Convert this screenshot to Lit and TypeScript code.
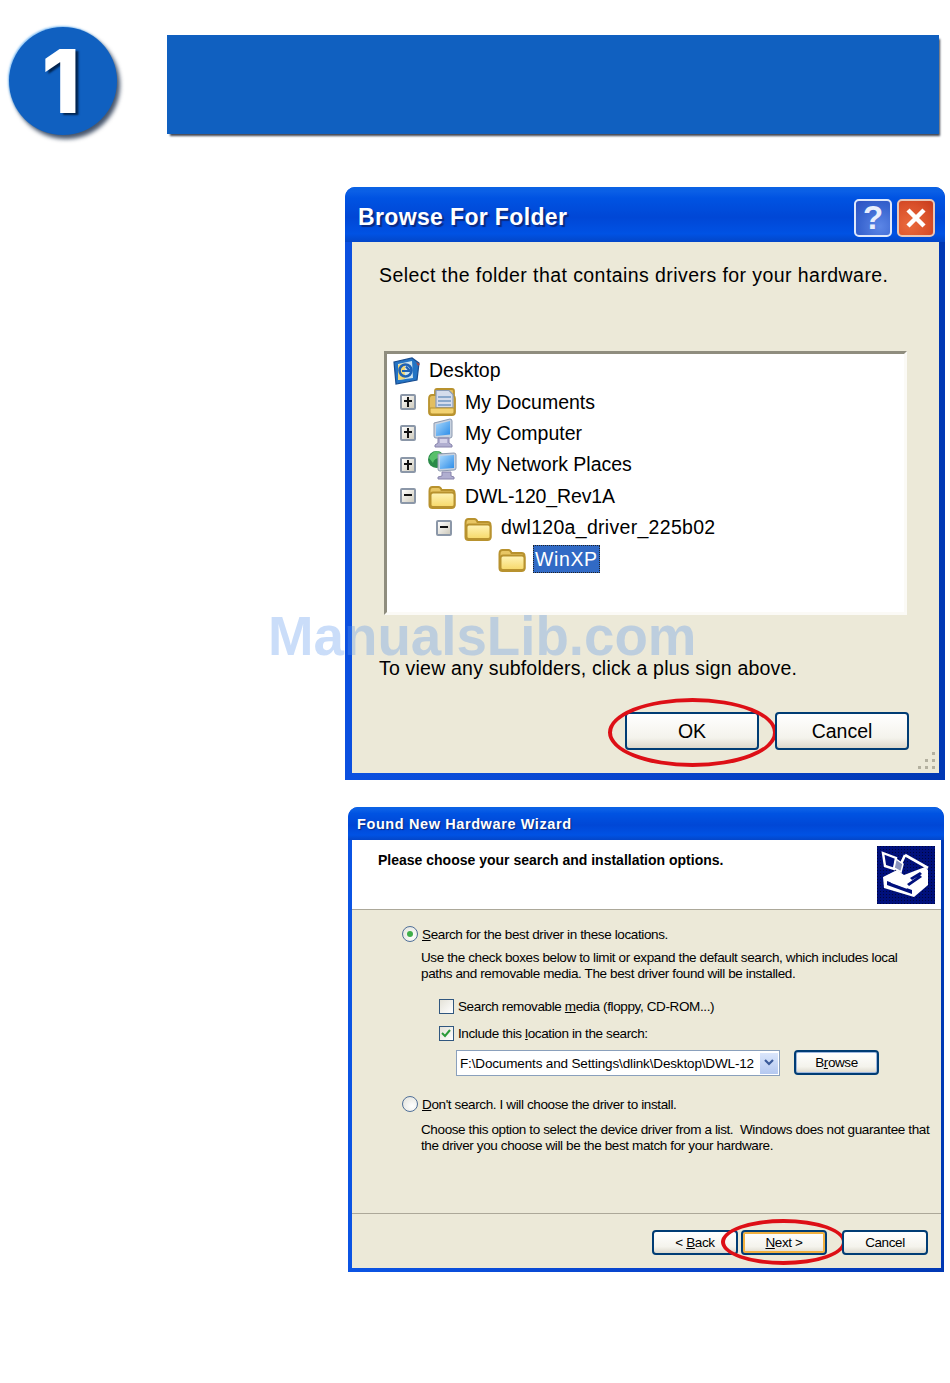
import { LitElement, html, css, svg } from "lit";
import { customElement } from "lit/decorators.js";

const grad = svg`<defs>
  <linearGradient id="fy" x1="0" y1="0" x2="0" y2="1"><stop offset="0" stop-color="#fff4b8"/><stop offset="1" stop-color="#f6d868"/></linearGradient>
  <linearGradient id="scr" x1="0" y1="0" x2="1" y2="1"><stop offset="0" stop-color="#a8d8fc"/><stop offset="1" stop-color="#2c8ce8"/></linearGradient>
</defs>`;

const folder = () => svg`<svg class="ico" viewBox="0 0 28 28">${grad}
  <path d="M1.500 9q0-4 3-4h6q2 0 3 3h10q3 0 3 3v12q0 3-3 3H4.500q-3 0-3-3z" fill="#e8c664" stroke="#b8922e" stroke-width="2"/>
  <path d="M2.500 23V13q0-2.500 2.500-2.500h19q2.500 0 2.500 2.500v10q0 2-2.500 2H5q-2.500 0-2.500-2z" fill="url(#fy)" stroke="#b8922e" stroke-width="2"/>
</svg>`;

const documents = svg`<svg class="ico" viewBox="0 0 28 28">${grad}
  <path d="M1 11q0-4 3-4h3v-4q0-2 2-2h15q2 0 2 2v5q1 1 1 3v13q0 3-3 3H4q-3 0-3-3z" fill="#e2be60" stroke="#b8922e" stroke-width="1.800"/>
  <path d="M8 2.500h13l4 4v13H8z" fill="#d4dcec" stroke="#8a9cb8" stroke-width="1.200"/>
  <path d="M10 9h13M10 13h13M10 17h13" stroke="#8aa8cc" stroke-width="1.800"/>
  <path d="M2 20h24v4q0 2-2 2H4q-2 0-2-2z" fill="#f2d272" stroke="#b8922e" stroke-width="1"/>
</svg>`;

const computer = svg`<svg class="ico tall" viewBox="0 0 28 30">${grad}
  <path d="M6 5l16-4q2 0 2 2v15q0 2-2 2L8 20q-2 0-2-2z" fill="#c8d2e0" stroke="#8d9ab0" stroke-width="1"/>
  <path d="M8 6.500l14-3.500v13.500L8 18z" fill="url(#scr)"/>
  <path d="M10 20h11v5l3 2v2H7v-2l3-2z" fill="#b0aed0" stroke="#8884ac" stroke-width="1"/>
  <path d="M12 21h7v4h-7z" fill="#d4d2e8"/>
</svg>`;

const network = svg`<svg class="ico tall" viewBox="0 0 28 30">${grad}
  <circle cx="8.500" cy="9.500" r="8.500" fill="#2a8a48"/>
  <path d="M1 8q3-7 9-7 4 2 2 7-6 0-7 5z" fill="#58c06a"/>
  <path d="M10 4l16-1q2 0 2 2v13q0 2-2 2l-14 1q-2 0-2-2z" fill="#c8d2e0" stroke="#8d9ab0" stroke-width="1"/>
  <path d="M12 6l14-1v13l-14 1z" fill="url(#scr)"/>
  <path d="M14 22h9v4l3 1v2H10v-2l4-1z" fill="#b0aed0" stroke="#8884ac" stroke-width="1"/>
</svg>`;

const desktop = svg`<svg class="ico" viewBox="0 0 28 28">
  <path d="M2 5l18-4 7 5-2 17-21 4z" fill="#2474c4" stroke="#174c90" stroke-width="1.200"/>
  <path d="M6 7l14-3 1 17-15 2z" fill="#cfe6f0"/>
  <path d="M6 8l7-2v16l-7 1z" fill="#f2d878"/>
  <circle cx="13.500" cy="13.500" r="6" fill="none" stroke="#1f62b4" stroke-width="2.600"/>
  <path d="M10 14h8M14 9.500l4 4.500" stroke="#1f62b4" stroke-width="2.200"/>
  <path d="M24 5l4 2-2 2z" fill="#a04848"/>
</svg>`;

const hardware = svg`<svg viewBox="0 0 58 58" class="hw">
  <defs><pattern id="dots" width="3" height="3" patternUnits="userSpaceOnUse">
    <rect width="3" height="3" fill="#00107c"/><rect width="1" height="1" fill="#00063e"/></pattern></defs>
  <rect width="58" height="58" fill="url(#dots)"/>
  <path d="M6 31l14-7 7 5 21-8 3 3v15L37 51 7 42z" fill="#fff"/>
  <path d="M10 35l25 9v4L10 39z" fill="#00107c"/>
  <path d="M14 36l16 6" stroke="#fff" stroke-width="1.800"/>
  <path d="M33 32l10-6 2 2-10 6zM30 38l13-9 2 2-13 9z" fill="#00107c"/>
  <path d="M28 9l23 13M28 9l-6 13" stroke="#fff" stroke-width="2.600" fill="none"/>
  <path d="M6 7l13 5-2 11-9-3z" fill="#00107c" stroke="#fff" stroke-width="2.400"/>
  <path d="M19 13l7 5-2 8-7-4z" fill="#8a94bc" stroke="#fff" stroke-width="1.500"/>
</svg>`;

const tree = [
  { indent: 5, icon: desktop, label: "Desktop", exp: "", ls: 0 },
  { indent: 13, icon: documents, label: "My Documents", exp: "+", ls: 0 },
  { indent: 13, icon: computer, label: "My Computer", exp: "+", ls: 0 },
  { indent: 13, icon: network, label: "My Network Places", exp: "+", ls: 0 },
  { indent: 13, icon: folder(), label: "DWL-120_Rev1A", exp: "-", ls: -0.15 },
  { indent: 49, icon: folder(), label: "dwl120a_driver_225b02", exp: "-", ls: 0.3 },
  { indent: 111, icon: folder(), label: "WinXP", exp: "", sel: true, ls: 0.6 },
];

@customElement("app-root")
export class AppRoot extends LitElement {
  static styles = css`
    :host { display: block; height: 1383px; overflow: hidden; background: #fff; color: #000; font-family: "Liberation Sans", Arial, sans-serif; }
    .page { position: relative; height: 1383px; padding-top: 27px; box-sizing: border-box; }
    .head { display: flex; align-items: flex-start; margin-left: 9px; }
    .badge { box-sizing: border-box; width: 108px; height: 108px; padding-right: 4px; border-radius: 50%; background: #1060c0; box-shadow: 3px 4px 4px rgba(10, 30, 60, .75), -1px -1px 2px rgba(90, 170, 240, .7); display: flex; align-items: center; justify-content: center; font: 800 88px/1 Inter, sans-serif; color: #fff; text-shadow: 3px 2px 2px #02244f; }
    .banner { margin: 8px 0 0 50px; width: 772px; height: 99px; background: #1060c0; box-shadow: 2px 3px 2px -1px rgba(30, 35, 50, .85); }
    .win { position: relative; display: flex; flex-direction: column; box-sizing: border-box; border-radius: 10px 10px 0 0; }
    .title { display: flex; align-items: center; justify-content: space-between; flex: none; box-sizing: border-box; color: #fff; font-family: "Liberation Sans", sans-serif; font-weight: bold; white-space: nowrap; background: linear-gradient(#0a63e4 0, #0a5fe6 8%, #0053e2 20%, #0047d6 55%, #0052e4 85%, #0346c8 100%); border-radius: 10px 10px 0 0; }
    .client { background: #ece9d8; flex: 1; display: flex; flex-direction: column; position: relative; min-height: 0; }

    .w1 { margin: 52px 0 0 345px; width: 600px; height: 593px; padding-bottom: 7px; background: linear-gradient(90deg, #0b50e0, #0844cc 50%, #0038b4); }
    .w1 .title { height: 55px; padding: 6px 10px 0 13px; font-size: 23px; letter-spacing: 0.36px; text-shadow: 2px 2px 1px #0a2a80; }
    .w1 .client { margin: 0 6px 0 7px; padding-left: 27px; }
    .cap { display: flex; gap: 5px; }
    .cbtn { box-sizing: border-box; width: 38px; height: 38px; border: 2px solid #dfe8fb; border-radius: 5px; display: flex; align-items: center; justify-content: center; font: bold 33px/1 "Liberation Sans", sans-serif; color: #e8eefc; text-shadow: none; letter-spacing: 0; }
    .help { background: radial-gradient(circle at 70% 75%, #5c86e6, #3864cf 60%, #2c50c0); }
    .close { background: radial-gradient(circle at 30% 70%, #ea6a3c, #d9502a 60%, #c53a1c); border-color: #e9c6b6; }
    .close svg { width: 26px; height: 26px; }
    .lg { font-size: 19.5px; line-height: 24px; white-space: nowrap; }
    .l1 { margin-top: 21px; letter-spacing: 0.43px; }
    .tree { box-sizing: border-box; margin: 64px 0 0 5px; padding-top: 1px; width: 523px; height: 264px; background: #fff; border: 3px solid #fbfaf6; border-top-color: #8f8d7e; border-left-color: #8f8d7e; display: flex; flex-direction: column; flex: none; }
    .row { display: flex; align-items: center; height: 31.4px; flex: none; font-size: 19.5px; white-space: nowrap; }
    .exp { box-sizing: border-box; width: 16px; height: 16px; margin-right: 12px; border: 2px solid #8b97a8; border-radius: 2px; background: linear-gradient(135deg, #fff, #cfcbbd); position: relative; flex: none; }
    .exp::before { content: ""; position: absolute; left: 2px; right: 2px; top: 4px; height: 2px; background: #111; }
    .exp.plus::after { content: ""; position: absolute; top: 1px; bottom: 1px; left: 5px; width: 2px; background: #111; }
    .ico { width: 28px; height: 28px; flex: none; margin-right: 9px; overflow: visible; }
    .ico.tall { height: 30px; }
    .sel { background: #316ac5; color: #fff; outline: 1.500px dotted #222; outline-offset: -1px; margin-left: -2px; padding: 0 2px; height: 28px; line-height: 28px; }
    .l2 { margin-top: 41px; letter-spacing: 0.2px; }
    .btns { display: flex; justify-content: flex-end; }
    .w1 .btns { margin-top: 32px; padding-right: 30px; gap: 16px; }
    .btn { box-sizing: border-box; position: relative; display: flex; align-items: center; justify-content: center; background: linear-gradient(#fff, #f4f3ec 70%, #dcd8cc); border: 2px solid #003c74; border-radius: 4px; white-space: nowrap; }
    .w1 .btn { width: 134px; height: 38px; font-size: 19.500px; }
    .ring { position: absolute; box-sizing: border-box; border: 4px solid #dd0f16; border-radius: 50%; pointer-events: none; }
    .r1 { left: -19px; top: -16px; width: 169px; height: 69px; }
    .grip { position: absolute; right: 2px; bottom: 2px; width: 20px; height: 20px; }

    .w2 { margin: 27px 0 0 348px; width: 596px; height: 465px; padding-bottom: 4px; background: linear-gradient(90deg, #0b54e4, #0844cc 50%, #0038b4); }
    .w2 .title { height: 33px; padding-left: 9px; font-size: 14.500px; letter-spacing: 0.6px; text-shadow: 1px 1px 1px #0a2a80; }
    .w2 .client { margin: 0 3px 0 4px; font-size: 13.5px; letter-spacing: -0.38px; }
    .top { box-sizing: border-box; height: 70px; flex: none; background: #fff; border-bottom: 1px solid #aca899; display: flex; justify-content: space-between; padding: 6px 6px 0 26px; }
    .top b { margin-top: 4px; line-height: 20px; font-size: 14px; letter-spacing: 0; white-space: nowrap; }
    .hw { width: 58px; height: 58px; display: block; }
    .opt { display: flex; align-items: center; height: 16px; white-space: nowrap; }
    .radio { box-sizing: border-box; width: 16px; height: 16px; border-radius: 50%; border: 1.500px solid #4f6f98; background: radial-gradient(circle at 65% 65%, #fff, #e0e0d8); display: flex; align-items: center; justify-content: center; margin-right: 4px; flex: none; }
    .radio i { width: 6px; height: 6px; border-radius: 50%; background: #3fae4a; }
    .check { box-sizing: border-box; width: 15px; height: 15px; border: 1.500px solid #30577f; background: linear-gradient(135deg, #e4e2d8, #fff); margin-right: 4px; flex: none; display: flex; }
    .check svg { width: 12px; height: 12px; }
    .o1 { margin: 16px 0 0 50px; }
    .p { margin: 8px 0 0 69px; line-height: 16px; white-space: nowrap; }
    .o2 { margin: 16px 0 0 87px; }
    .o3 { margin: 11px 0 0 87px; }
    .path { display: flex; align-items: flex-start; gap: 14px; margin: 9px 0 0 104px; }
    .combo { box-sizing: border-box; width: 324px; height: 26px; background: #fff; border: 1.500px solid #8aa0bc; display: flex; align-items: center; justify-content: space-between; padding-left: 3px; white-space: nowrap; letter-spacing: -0.15px; }
    .arrow { width: 18px; height: 21px; margin-right: 1px; background: linear-gradient(#dbe6fb, #b4c8f0); display: flex; align-items: center; justify-content: center; }
    .arrow svg { width: 10px; height: 8px; }
    .browse { width: 85px; height: 25px; box-shadow: inset 0 0 0 1px #9db6dd; }
    .o4 { margin: 20px 0 0 50px; }
    .p2 { margin: 10px 0 0 69px; line-height: 15.500px; white-space: nowrap; }
    .foot { margin-top: auto; box-sizing: border-box; height: 55px; border-top: 1px solid #aca899; padding: 16px 13px 0 0; display: flex; justify-content: flex-end; }
    .foot .btn { width: 86px; height: 25px; }
    .back { margin-right: 3px; }
    .next { margin-right: 15px; box-shadow: inset 0 0 0 2px #f0b040; }
    .r2 { left: -22px; top: -13px; width: 125px; height: 46px; }
    .mark { position: absolute; left: 268px; top: 606px; font: bold 54.700px/60px "Liberation Sans", sans-serif; color: rgba(90, 150, 235, .32); white-space: nowrap; pointer-events: none; }
  `;

  render() {
    return html`<div class="page">
      <div class="head"><div class="badge">1</div><div class="banner"></div></div>

      <section class="win w1">
        <div class="title"><span>Browse For Folder</span>
          <div class="cap">
            <div class="cbtn help">?</div>
            <div class="cbtn close"><svg viewBox="0 0 26 26"><path d="M5 5l16 16M21 5L5 21" stroke="#fff" stroke-width="4.500"/></svg></div>
          </div>
        </div>
        <div class="client">
          <div class="lg l1">Select the folder that contains drivers for your hardware.</div>
          <div class="tree">
            ${tree.map(r => html`<div class="row" style="padding-left:${r.indent}px;letter-spacing:${r.ls}px">
              ${r.exp ? html`<span class="exp ${r.exp === "+" ? "plus" : ""}"></span>` : ""}
              ${r.icon}
              <span class=${r.sel ? "sel" : ""}>${r.label}</span>
            </div>`)}
          </div>
          <div class="lg l2">To view any subfolders, click a plus sign above.</div>
          <div class="btns">
            <div class="btn">OK<span class="ring r1"></span></div>
            <div class="btn">Cancel</div>
          </div>
          <svg class="grip" viewBox="0 0 20 20"><g fill="#b4b1a0"><rect x="15" y="1" width="3" height="3"/><rect x="8" y="8" width="3" height="3"/><rect x="15" y="8" width="3" height="3"/><rect x="1" y="15" width="3" height="3"/><rect x="8" y="15" width="3" height="3"/><rect x="15" y="15" width="3" height="3"/></g></svg>
        </div>
      </section>

      <section class="win w2">
        <div class="title"><span>Found New Hardware Wizard</span></div>
        <div class="client">
          <div class="top"><b>Please choose your search and installation options.</b>${hardware}</div>
          <div class="opt o1"><span class="radio"><i></i></span><span><u>S</u>earch for the best driver in these locations.</span></div>
          <div class="p">Use the check boxes below to limit or expand the default search, which includes local<br>paths and removable media. The best driver found will be installed.</div>
          <div class="opt o2"><span class="check"></span><span>Search removable <u>m</u>edia (floppy, CD-ROM...)</span></div>
          <div class="opt o3"><span class="check"><svg viewBox="0 0 12 12"><path d="M2 6l3 3 5-6" fill="none" stroke="#2a9a3a" stroke-width="2"/></svg></span><span>Include this <u>l</u>ocation in the search:</span></div>
          <div class="path">
            <div class="combo"><span>F:\\Documents and Settings\\dlink\\Desktop\\DWL-12</span><span class="arrow"><svg viewBox="0 0 10 8"><path d="M1 1l4 4 4-4" fill="none" stroke="#3a5a9a" stroke-width="2.200"/></svg></span></div>
            <div class="btn browse"><span>B<u>r</u>owse</span></div>
          </div>
          <div class="opt o4"><span class="radio"></span><span><u>D</u>on't search. I will choose the driver to install.</span></div>
          <div class="p2">Choose this option to select the device driver from a list.&nbsp; Windows does not guarantee that<br>the driver you choose will be the best match for your hardware.</div>
          <div class="foot">
            <div class="btn back"><span>&lt; <u>B</u>ack</span></div>
            <div class="btn next"><span><u>N</u>ext &gt;</span><span class="ring r2"></span></div>
            <div class="btn">Cancel</div>
          </div>
        </div>
      </section>

      <div class="mark">ManualsLib.com</div>
    </div>`;
  }
}
